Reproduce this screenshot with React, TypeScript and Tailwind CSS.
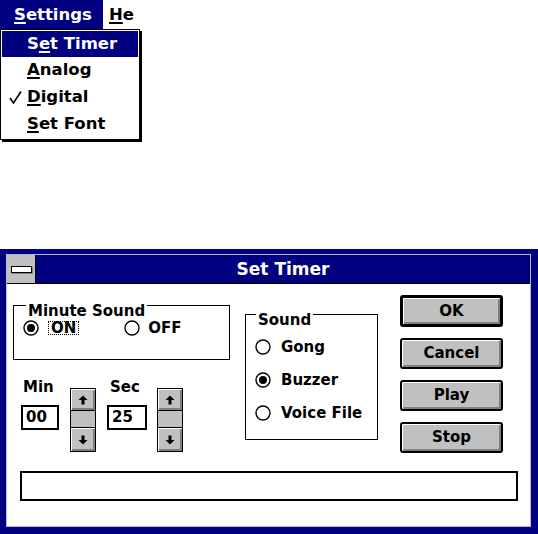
import React from "react";

function Radio({ checked }: { checked?: boolean }) {
  return (
    <svg width="16" height="16" viewBox="0 0 16 16" className="shrink-0">
      <circle cx="8" cy="8" r="7" fill="white" stroke="black" strokeWidth="1.4" />
      {checked && <circle cx="8" cy="8" r="4" fill="black" />}
    </svg>
  );
}

function Arrow({ down }: { down?: boolean }) {
  return (
    <svg width="10" height="10" viewBox="0 0 10 10" className={down ? "rotate-180" : ""}>
      <polygon points="5,0.5 9.5,5 6.5,5 6.5,9.5 3.5,9.5 3.5,5 0.5,5" fill="black" />
    </svg>
  );
}

function Spin() {
  return (
    <div className="w-[26px] h-[64px] border border-black flex flex-col bg-[#c0c0c0] mt-[8px]">
      <div className="h-[22px] border-b border-black flex items-center justify-center shadow-[inset_1px_1px_0_#fff,inset_-2px_-2px_0_#808080]">
        <Arrow />
      </div>
      <div className="flex-1" />
      <div className="h-[24px] border-t border-black flex items-center justify-center shadow-[inset_1px_1px_0_#fff,inset_-2px_-2px_0_#808080]">
        <Arrow down />
      </div>
    </div>
  );
}

function Btn({ label, def }: { label: string; def?: boolean }) {
  return (
    <div
      className={`rounded-[3px] bg-[#c0c0c0] flex items-center justify-center leading-none shadow-[inset_1px_1px_0_#fff,inset_-2px_-2px_0_#808080] ${
        def ? "h-[32px] border-[3px] border-black" : "h-[31px] border-2 border-black"
      }`}
    >
      {label}
    </div>
  );
}

export default function App() {
  return (
    <div className="w-[538px] h-[534px] bg-white overflow-hidden text-black font-bold font-['DejaVu_Sans',sans-serif]">
      {/* Menu area */}
      <div className="h-[249px] relative">
        <div className="flex h-[29px] text-[16.5px] leading-none">
          <div className="w-[103px] bg-[#000080] text-white flex items-center pl-[14px] pt-[2px]">
            <span>
              <span className="underline decoration-[1.5px] underline-offset-[2px]">S</span>ettings
            </span>
          </div>
          <div className="flex items-center pl-[6px] pt-[2px]">
            <span>
              <span className="underline decoration-[1.5px] underline-offset-[2px]">H</span>e
            </span>
          </div>
        </div>
        <div className="w-[140px] border border-black p-[1px] shadow-[2px_2px_0_0_#000] text-[16.5px] leading-none bg-white">
          <div className="h-[26px] bg-[#000080] text-white flex items-center pl-[25px]">
            <span>
              S<span className="underline decoration-[1.5px] underline-offset-[2px]">e</span>t Timer
            </span>
          </div>
          <div className="h-[27px] flex items-center pl-[25px]">
            <span>
              <span className="underline decoration-[1.5px] underline-offset-[2px]">A</span>nalog
            </span>
          </div>
          <div className="h-[27px] flex items-center relative pl-[25px]">
            <svg width="13" height="13" viewBox="0 0 13 13" className="absolute left-[7px] top-[7px]">
              <polyline points="1,7 4.5,12 12,0.5" fill="none" stroke="black" strokeWidth="1.6" />
            </svg>
            <span>
              <span className="underline decoration-[1.5px] underline-offset-[2px]">D</span>igital
            </span>
          </div>
          <div className="h-[27px] flex items-center pl-[25px]">
            <span>
              <span className="underline decoration-[1.5px] underline-offset-[2px]">S</span>et Font
            </span>
          </div>
        </div>
      </div>

      {/* Dialog */}
      <div className="h-[285px] bg-[#000080] pt-[5px] pl-[6px] pr-[7px] pb-[7px]">
        <div className="h-full border border-[#b8b8d8] flex flex-col">
          <div className="h-[29px] flex border-b border-black shrink-0">
            <div className="w-[29px] bg-[#c0c0c0] border-r border-black flex items-center justify-center">
              <div className="w-[21px] h-[7px] bg-white border border-black shadow-[1px_1px_0_#808080]" />
            </div>
            <div className="flex-1 bg-[#000080] text-white text-[17px] leading-none flex items-center justify-center">
              Set Timer
            </div>
          </div>
          <div className="flex-1 bg-white text-[15px] leading-none">
            <div className="h-[187px] flex items-start">
              {/* Left column */}
              <div className="ml-[6px] w-[217px]">
                <div className="relative mt-[21px] h-[55px] border border-black">
                  <span className="absolute -top-[2px] left-[12px] bg-white px-[2px]">Minute Sound</span>
                  <div className="flex items-center mt-[14px]">
                    <div className="ml-[9px]">
                      <Radio checked />
                    </div>
                    <span className="ml-[9px] border border-dotted border-black px-[2px] leading-[12px]">ON</span>
                    <div className="ml-[45px]">
                      <Radio />
                    </div>
                    <span className="ml-[8px]">OFF</span>
                  </div>
                </div>
                <div className="flex items-start mt-[20px]">
                  <div className="ml-[8px] w-[38px]">
                    <div className="pl-[2px]">Min</div>
                    <div className="mt-[10px] h-[25px] border-2 border-black flex items-center pl-[3px]">00</div>
                  </div>
                  <div className="ml-[11px]">
                    <Spin />
                  </div>
                  <div className="ml-[11px] w-[40px]">
                    <div className="pl-[3px]">Sec</div>
                    <div className="mt-[10px] h-[25px] border-2 border-black flex items-center pl-[3px]">25</div>
                  </div>
                  <div className="ml-[10px]">
                    <Spin />
                  </div>
                </div>
              </div>

              {/* Sound group */}
              <div className="relative ml-[15px] mt-[30px] w-[133px] h-[126px] border border-black">
                <span className="absolute -top-[2px] left-[10px] bg-white px-[2px]">Sound</span>
                <div className="flex flex-col pt-[24px] gap-[17px] pl-[9px]">
                  <div className="flex items-center gap-[10px]">
                    <Radio />
                    <span>Gong</span>
                  </div>
                  <div className="flex items-center gap-[10px]">
                    <Radio checked />
                    <span>Buzzer</span>
                  </div>
                  <div className="flex items-center gap-[10px]">
                    <Radio />
                    <span>Voice File</span>
                  </div>
                </div>
              </div>

              {/* Buttons */}
              <div className="ml-[22px] mt-[11px] w-[103px] flex flex-col gap-[11px]">
                <Btn label="OK" def />
                <Btn label="Cancel" />
                <Btn label="Play" />
                <Btn label="Stop" />
              </div>
            </div>
            <div className="ml-[13px] w-[498px] h-[30px] border-2 border-black" />
          </div>
        </div>
      </div>
    </div>
  );
}
